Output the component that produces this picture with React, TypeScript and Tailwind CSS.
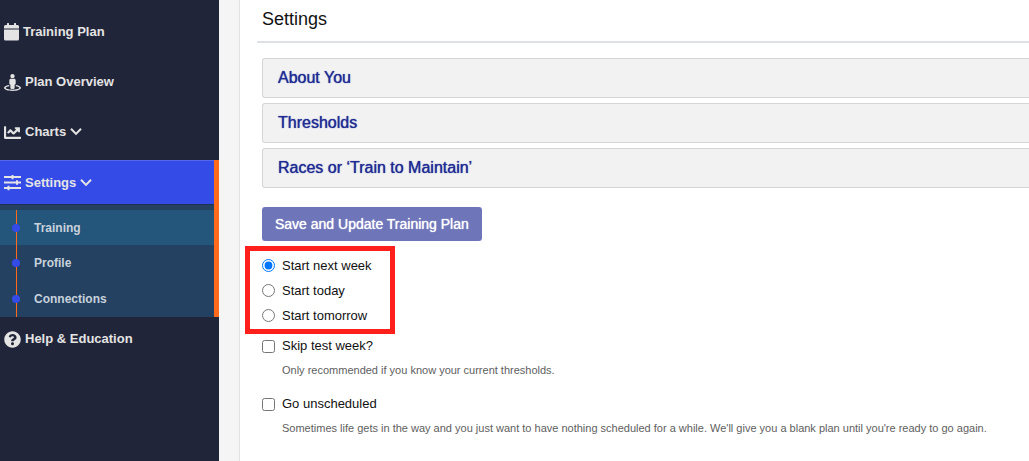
import { useState } from "react";
import type { ReactNode } from "react";
import { FaChartLine, FaQuestionCircle, FaStreetView } from "react-icons/fa";

const SUB_ITEMS = ['Training', 'Profile', 'Connections'];
const PANELS = ['About You', 'Thresholds', 'Races or ‘Train to Maintain’'];

const START_OPTIONS = [
    { value: 'next-week', label: 'Start next week' },
    { value: 'today', label: 'Start today' },
    { value: 'tomorrow', label: 'Start tomorrow' },
];

function Chevron() {
    return (
        <svg width="12" height="8" viewBox="0 0 12 8" fill="none" stroke="currentColor" strokeWidth="2" aria-hidden="true">
            <path d="M1 0.7 6 5.9 11 0.7" />
        </svg>
    );
}

function Calendar() {
    return (
        <svg width="15" height="18" viewBox="0 0 15 18" fill="currentColor" aria-hidden="true">
            <path d="M1.5 2H3V.5q0-.5.5-.5h1q.5 0 .5.5V2h5V.5q0-.5.5-.5h1q.5 0 .5.5V2h1.500Q15 2 15 3.500V5H0V3.500Q0 2 1.500 2Z" />
            <path opacity="0.5" d="M0 5h15v2H0z" />
            <path d="M0 7h15v9q0 1.500-1.500 1.500h-12Q0 17.500 0 16Z" />
        </svg>
    );
}

function Sliders() {
    return (
        <svg width="17" height="16" viewBox="0 0 17 16" fill="none" stroke="currentColor" aria-hidden="true">
            <path strokeWidth="2" d="M0 2h17M0 7.500h17M0 13h17" />
            <path strokeWidth="2" d="M8.500 0v4.300M13 5.300v4.400M4.500 10.800v4.400" />
        </svg>
    );
}

interface NavItemProps {
    icon: ReactNode;
    label: string;
    hasMenu?: boolean;
    active?: boolean;
}

function NavItem({ icon, label, hasMenu, active }: NavItemProps) {
    return (
        <a
            href="#"
            className={`flex h-11 items-center gap-1 pl-1 text-[13px] font-bold text-[#e4e4e4] ${active ? "border-t border-[#5366ee] bg-[#344be8]" : ""}`}
        >
            {icon}
            <span>{label}</span>
            {hasMenu && <Chevron />}
        </a>
    );
}

interface CheckOptionProps {
    id: string;
    label: string;
    note: string;
}

function CheckOption({ id, label, note }: CheckOptionProps) {
    const [checked, setChecked] = useState(false);

    return (
        <div>
            <label htmlFor={id} className="flex h-6 items-center gap-[7px] text-[13px]">
                <input id={id} type="checkbox" className="size-[13px]" checked={checked} onChange={(e) => setChecked(e.target.checked)} />
                {label}
            </label>
            <p className="pl-5 text-[11px] leading-6 text-[#606060]">{note}</p>
        </div>
    );
}

export default function App() {
    const [start, setStart] = useState('next-week');

    return (
        <div className="flex min-h-screen bg-[#f5f5f5] font-['Liberation_Sans',Arial,sans-serif] text-[#111]">
            <nav className="w-[219px] shrink-0 bg-[#212539] pt-2.5">
                <div className="mb-1.5 flex flex-col gap-1.5">
                    <NavItem icon={<Calendar />} label="Training Plan" />
                    <NavItem icon={<FaStreetView size={17} />} label="Plan Overview" />
                    <NavItem icon={<FaChartLine size={17} />} label="Charts" hasMenu />
                </div>
                <div className="border-r-5 border-[#ff6a1c]">
                    <NavItem icon={<Sliders />} label="Settings" hasMenu active />
                    <div className="border-t border-[#1e3351] bg-[#244161] pt-[5px]">
                        <ul>
                            {SUB_ITEMS.map((item, i) => (
                                <li key={item} className={i === 0 ? "h-[35px] bg-[#24557b]" : "h-9"}>
                                    <a href="#" className="flex h-full items-center text-xs font-bold text-[#c8d2dc]">
                                        <span className="relative ml-4 mr-[17px] flex h-full w-px items-center bg-[#ff6a1c]">
                                            <span className="absolute -left-1 size-2 rounded-full bg-[#344be8]" />
                                        </span>
                                        {item}
                                    </a>
                                </li>
                            ))}
                        </ul>
                    </div>
                </div>
                <NavItem icon={<FaQuestionCircle size={17} />} label="Help & Education" />
            </nav>

            <main className="ml-5 min-w-0 flex-1 border-l border-[#e2e2e2] bg-white">
                <h1 className="ml-[17px] h-[43px] border-b-2 border-[#dfe0e6] pl-[5px] text-lg leading-[38px]">Settings</h1>
                <div className="pl-[22px] pt-[15px]">
                    <div className="flex flex-col gap-[5px]">
                        {PANELS.map((panel) => (
                            <button
                                key={panel}
                                className="h-10 rounded-l-[3px] border border-r-0 border-[#d6d6d6] bg-[#f2f2f2] px-[15px] text-left text-base text-[#1f2b93] [text-shadow:0_0_1px_#1f2b93]"
                            >
                                {panel}
                            </button>
                        ))}
                    </div>
                    <button className="mt-[19px] block h-[34px] rounded-[3px] bg-[#6e76b9] px-[13px] text-sm text-white [text-shadow:0_0_1px_#fff]">
                        Save and Update Training Plan
                    </button>

                    <fieldset className="-ml-[17px] mt-[5px] h-[88px] w-[150px] border-5 border-[#ff201b] pl-3 pt-0.5">
                        {START_OPTIONS.map((opt) => (
                            <label key={opt.value} className="flex h-[25px] items-center gap-[7px] text-[13px]">
                                <input
                                    type="radio"
                                    name="start"
                                    className="size-[13px]"
                                    value={opt.value}
                                    checked={start === opt.value}
                                    onChange={() => setStart(opt.value)}
                                />
                                {opt.label}
                            </label>
                        ))}
                    </fieldset>

                    <div className="flex flex-col gap-2.5">
                        <CheckOption id="skip-test" label="Skip test week?" note="Only recommended if you know your current thresholds." />
                        <CheckOption
                            id="unscheduled"
                            label="Go unscheduled"
                            note="Sometimes life gets in the way and you just want to have nothing scheduled for a while. We'll give you a blank plan until you're ready to go again."
                        />
                    </div>
                </div>
            </main>
        </div>
    );
}
